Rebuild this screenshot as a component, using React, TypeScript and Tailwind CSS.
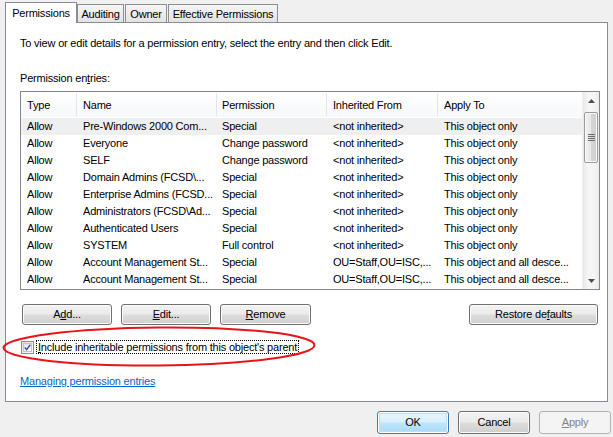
import React from "react";

type Row = [string, string, string, string, string];

const rows: Row[] = [
  ["Allow", "Pre-Windows 2000 Com...", "Special", "<not inherited>", "This object only"],
  ["Allow", "Everyone", "Change password", "<not inherited>", "This object only"],
  ["Allow", "SELF", "Change password", "<not inherited>", "This object only"],
  ["Allow", "Domain Admins (FCSD\\...", "Special", "<not inherited>", "This object only"],
  ["Allow", "Enterprise Admins (FCSD...", "Special", "<not inherited>", "This object only"],
  ["Allow", "Administrators (FCSD\\Ad...", "Special", "<not inherited>", "This object only"],
  ["Allow", "Authenticated Users", "Special", "<not inherited>", "This object only"],
  ["Allow", "SYSTEM", "Full control", "<not inherited>", "This object only"],
  ["Allow", "Account Management St...", "Special", "OU=Staff,OU=ISC,...", "This object and all desce..."],
  ["Allow", "Account Management St...", "Special", "OU=Staff,OU=ISC,...", "This object and all desce..."],
];

function Btn({ children, className }: { children: React.ReactNode; className: string }) {
  return (
    <div
      className={
        "flex items-center justify-center rounded-[3px] border border-[#707070] bg-[linear-gradient(#f2f2f2_0%,#ebebeb_48%,#dddddd_52%,#cfcfcf_100%)] shadow-[inset_0_0_0_1px_#fbfbfb] " +
        className
      }
    >
      {children}
    </div>
  );
}

const cols = "grid grid-cols-[56px_140px_110px_111px_1fr]";

export default function App() {
  return (
    <div className="relative w-[613px] h-[437px] overflow-hidden bg-[#f0f0f0] text-[11px] tracking-[-0.2px] leading-[15px] text-black font-['Liberation_Sans',Arial,sans-serif]">
      {/* tabs */}
      <div className="flex items-end h-[22px] pl-[5px]">
        <div className="relative z-10 -mb-px h-[21px] w-[72px] border border-b-0 border-[#898c95] bg-white flex items-center justify-center pt-[1px]">
          Permissions
        </div>
        <div className="h-[18px] w-[47px] border border-b-0 border-[#8c8e94] bg-[linear-gradient(#f5f5f5,#e3e3e3)] flex items-center justify-center pt-[1px]">
          Auditing
        </div>
        <div className="ml-px h-[18px] w-[42px] border border-b-0 border-[#8c8e94] bg-[linear-gradient(#f5f5f5,#e3e3e3)] flex items-center justify-center pt-[1px]">
          Owner
        </div>
        <div className="ml-px h-[18px] w-[110px] border border-b-0 border-[#8c8e94] bg-[linear-gradient(#f5f5f5,#e3e3e3)] flex items-center justify-center pt-[1px]">
          Effective Permissions
        </div>
      </div>

      {/* panel */}
      <div className="mx-[5px] h-[380px] border border-[#898c95] bg-white pl-[14px] pt-[13px]">
        <div>To view or edit details for a permission entry, select the entry and then click Edit.</div>
        <div className="mt-[20px]">
          Permission en<span className="underline">t</span>ries:
        </div>

        {/* list */}
        <div className="mt-[5px] w-[580px] h-[199px] border border-[#828790] flex">
          <div className="flex-1 min-w-0">
            <div className={cols + " h-[25px] items-center bg-[linear-gradient(#ffffff,#f7f8fa)]"}>
              <div className="pl-[6px] pt-[2px] border-r border-[#e3e5e8] h-[23px] flex items-center">Type</div>
              <div className="pl-[6px] pt-[2px] border-r border-[#e3e5e8] h-[23px] flex items-center">Name</div>
              <div className="pl-[5px] pt-[2px] border-r border-[#e3e5e8] h-[23px] flex items-center">Permission</div>
              <div className="pl-[6px] pt-[2px] border-r border-[#e3e5e8] h-[23px] flex items-center">Inherited From</div>
              <div className="pl-[6px] pt-[2px] h-[23px] flex items-center">Apply To</div>
            </div>
            <div className="mt-px">
              {rows.map((r, i) => (
                <div
                  key={i}
                  className={cols + " h-[17px] items-center whitespace-nowrap " + (i === 0 ? "bg-[#efefef]" : "")}
                >
                  <div className="pl-[6px] overflow-hidden">{r[0]}</div>
                  <div className="pl-[6px] overflow-hidden">{r[1]}</div>
                  <div className="pl-[5px] overflow-hidden">{r[2]}</div>
                  <div className="pl-[6px] overflow-hidden">{r[3]}</div>
                  <div className="pl-[6px] overflow-hidden">{r[4]}</div>
                </div>
              ))}
            </div>
          </div>
          {/* scrollbar */}
          <div className="w-[17px] flex flex-col bg-[linear-gradient(90deg,#e8e8e8,#f5f5f5_30%,#f5f5f5_70%,#ebebeb)] border-l border-[#f0f0f0]">
            <div className="h-[17px] flex items-center justify-center">
              <svg width="7" height="4" viewBox="0 0 7 4">
                <path d="M0 4 L3.5 0 L7 4 Z" fill="#4d4d4d" />
              </svg>
            </div>
            <div className="mt-[3px] mx-[1px] h-[51px] rounded-[2px] border border-[#9b9b9b] bg-[linear-gradient(90deg,#f2f2f2,#e6e6e6_50%,#d6d6d6_51%,#cfcfcf)] shadow-[inset_0_0_0_1px_#f9f9f9] flex flex-col items-center justify-center gap-[1px]">
              <div className="w-[7px] h-px bg-[#6b6b6b]" />
              <div className="w-[7px] h-px bg-[#6b6b6b]" />
              <div className="w-[7px] h-px bg-[#6b6b6b]" />
              <div className="w-[7px] h-px bg-[#6b6b6b]" />
            </div>
            <div className="flex-1" />
            <div className="h-[17px] flex items-center justify-center">
              <svg width="7" height="4" viewBox="0 0 7 4">
                <path d="M0 0 L3.5 4 L7 0 Z" fill="#4d4d4d" />
              </svg>
            </div>
          </div>
        </div>

        {/* buttons */}
        <div className="mt-[14px] w-[580px] flex h-[21px]">
          <Btn className="ml-[2px] w-[90px]">
            <span>
              A<span className="underline">d</span>d...
            </span>
          </Btn>
          <Btn className="ml-[9px] w-[90px]">
            <span>
              <span className="underline">E</span>dit...
            </span>
          </Btn>
          <Btn className="ml-[9px] w-[91px]">
            <span>
              <span className="underline">R</span>emove
            </span>
          </Btn>
          <Btn className="ml-auto mr-[2px] w-[129px]">
            <span>
              Restore de<span className="underline">f</span>aults
            </span>
          </Btn>
        </div>

        {/* checkbox */}
        <div className="mt-[15px] flex items-center h-[14px]">
          <div className="ml-[1px] w-[13px] h-[13px] border border-[#8f8f8f] bg-[linear-gradient(135deg,#dcdcdc,#ffffff)] p-px">
            <div className="w-full h-full border border-[#c5c5c5] bg-[linear-gradient(135deg,#e4e4e4,#fbfbfb)] flex items-center justify-center">
              <svg width="9" height="9" viewBox="0 0 9 9">
                <path d="M1 4.6 L3.4 7.2 L8 1" fill="none" stroke="#3b4e96" strokeWidth="1.8" />
              </svg>
            </div>
          </div>
          <div className="ml-[2px] border border-dotted border-black px-px leading-[12px]">
            <span className="underline">I</span>nclude inheritable permissions from this object's parent
          </div>
        </div>

        {/* link */}
        <div className="mt-[20px] text-[#0066cc] underline">Managing permission entries</div>
      </div>

      {/* footer */}
      <div className="mt-[9px] flex justify-end gap-[9px] pr-[2px] h-[23px]">
        <div className="w-[72px] flex items-center justify-center rounded-[3px] border border-[#3c7fb1] bg-[linear-gradient(#eaf6fd_0%,#d9f0fc_48%,#bee6fd_52%,#a7d9f5_100%)] shadow-[inset_0_0_0_1px_#ffffff,inset_0_0_0_2px_#b8e0f8]">
          OK
        </div>
        <Btn className="w-[72px]">Cancel</Btn>
        <div className="w-[72px] flex items-center justify-center rounded-[3px] border border-[#adb2b5] bg-[#f4f4f4] text-[#838383]">
          <span>
            <span className="underline">A</span>pply
          </span>
        </div>
      </div>

      {/* red ellipse annotation */}
      <svg className="absolute left-0 top-[325px] pointer-events-none" width="320" height="44" viewBox="0 0 320 44">
        <ellipse cx="159" cy="21.5" rx="155.5" ry="19" fill="none" stroke="#e8141b" strokeWidth="2" transform="rotate(-0.5 159 21.5)" />
      </svg>
    </div>
  );
}
